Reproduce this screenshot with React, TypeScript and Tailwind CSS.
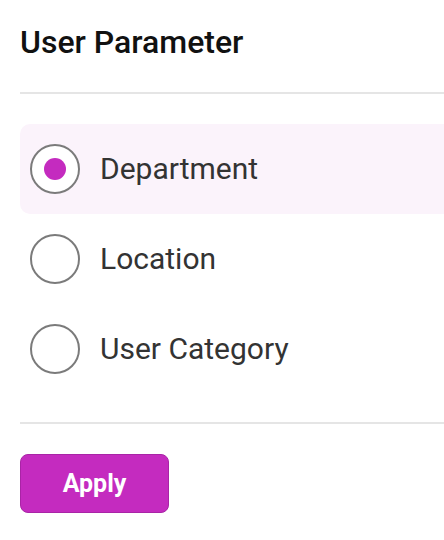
import React, { useState } from "react";

const options = ["Department", "Location", "User Category"];

export default function App() {
  const [selected, setSelected] = useState("Department");
  return (
    <div
      className="w-[444px] h-[540px] bg-white overflow-hidden pl-5"
      style={{ fontFamily: "Roboto, 'Liberation Sans', sans-serif" }}
    >
      <div className="pt-[24px] h-[92px]">
        <h1 className="text-[32px] leading-[36px] font-medium text-[#111111]">User Parameter</h1>
      </div>
      <div className="h-[2px] bg-[#e5e5e5]" />
      <div className="mt-[30px] flex flex-col">
        {options.map((o) => {
          const isSel = o === selected;
          return (
            <button
              key={o}
              onClick={() => setSelected(o)}
              className={
                "h-[90px] flex items-center gap-5 pl-[10px] text-left rounded-l-[10px] " +
                (isSel ? "bg-[#fbf3fb]" : "bg-transparent")
              }
            >
              <span className="w-[50px] h-[50px] shrink-0 rounded-full border-2 border-[#7b7b7b] bg-white flex items-center justify-center">
                {isSel && <span className="w-[22px] h-[22px] rounded-full bg-[#c42bbf]" />}
              </span>
              <span className="text-[30px] leading-[36px] text-[#333333]">{o}</span>
            </button>
          );
        })}
      </div>
      <div className="mt-[28px] h-[2px] bg-[#e5e5e5]" />
      <div className="mt-[30px]">
        <button className="w-[149px] h-[59px] rounded-[8px] bg-[#c42bbf] border border-[#a924a6] text-white text-[25px] font-bold flex items-center justify-center">
          Apply
        </button>
      </div>
    </div>
  );
}
